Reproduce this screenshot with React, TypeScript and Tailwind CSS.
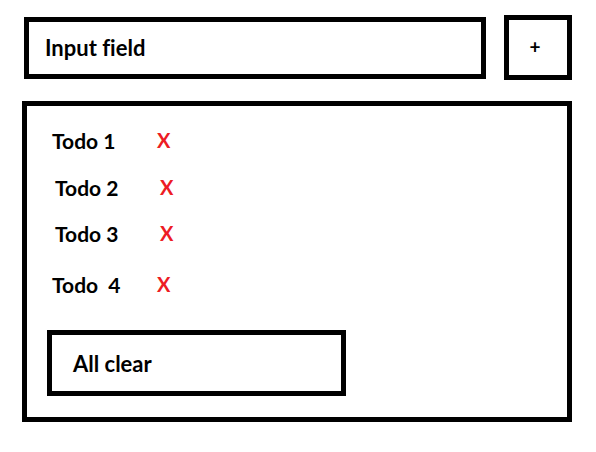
import React, { useState } from 'react';

const todos = [
  { id: 1, label: 'Todo 1', row: 'mt-[22px] pl-[25px]' },
  { id: 2, label: 'Todo 2', row: 'mt-[23px] pl-[28px]' },
  { id: 3, label: 'Todo 3', row: 'mt-[22px] pl-[28px]' },
  { id: 4, label: 'Todo\u00a0 4', row: 'mt-[27px] pl-[25px]' },
];

const App: React.FC = () => {
  const [input, setInput] = useState('');

  return (
    <div className="w-[596px] h-[452px] bg-white pt-[15px] font-['Lato','Liberation_Sans',sans-serif] font-bold text-black [font-variant-ligatures:none]">
      <div className="flex items-center pl-[24px]">
        <div className="w-[462px] h-[62px] border-[5px] border-black flex items-center pl-[16px]">
          <input
            value={input}
            onChange={(e) => setInput(e.target.value)}
            placeholder="Input field"
            className="w-full bg-transparent outline-none text-[22px] placeholder:text-black [font-variant-ligatures:none]"
          />
        </div>
        <button className="ml-[18px] w-[68px] h-[65px] border-[5px] border-black flex items-center justify-center pr-[6px] text-[19px]">
          +
        </button>
      </div>

      <div className="ml-[22px] mt-[21px] w-[550px] h-[321px] border-[5px] border-black flex flex-col">
        {todos.map((t) => (
          <div key={t.id} className={`flex items-center h-[24px] ${t.row}`}>
            <span className="text-[21px] leading-none w-[105px] whitespace-pre">{t.label}</span>
            <span className="text-[20px] leading-none text-[#ed1c24]">X</span>
          </div>
        ))}
        <button className="mt-[34px] ml-[20px] w-[299px] h-[66px] border-[5px] border-black flex items-center pl-[21px] text-[22px]">
          All clear
        </button>
      </div>
    </div>
  );
};

export default App;
